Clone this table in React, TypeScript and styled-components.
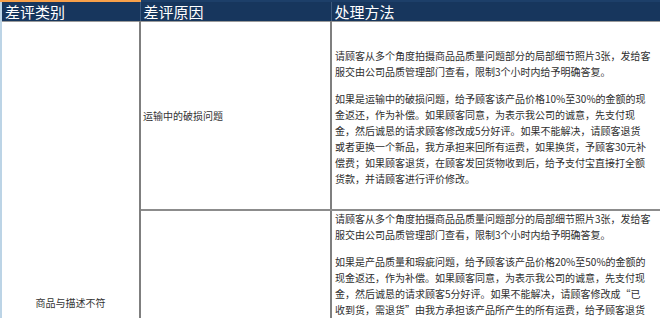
import React from "react";
import styled, { createGlobalStyle } from "styled-components";

const Global = createGlobalStyle`
  html, body {
    margin: 0;
    padding: 0;
    background: #ffffff;
    overflow: hidden;
  }
  body {
    font-family: "Noto Sans CJK SC", "Noto Sans", sans-serif;
  }
`;

const Table = styled.table`
  border-collapse: collapse;
  table-layout: fixed;
  width: 664px;
`;

const Col = styled.col<{ $w: number }>`
  width: ${(p) => p.$w}px;
`;

const HeadCell = styled.th<{ $first?: boolean }>`
  height: 19px;
  padding: 0 0 0 3px;
  background: #17365d;
  color: #ffffff;
  font-size: 15px;
  font-weight: 400;
  line-height: 19px;
  text-align: left;
  white-space: nowrap;
  border-top: 2px solid ${(p) => (p.$first ? "#f7a04a" : "#1d3f69")};
  border-bottom: 1px solid #9a9a9a;
  border-left: ${(p) => (p.$first ? "2px solid #bcd4e6" : "1px solid #3d5a7e")};
  vertical-align: middle;
`;

const CategoryCell = styled.td`
  border-left: 2px solid #bcd4e6;
  border-right: 2px solid #7f7f7f;
  padding: 0;
  font-size: 10px;
  line-height: 16px;
  color: #333333;
  text-align: center;
  vertical-align: middle;
  white-space: nowrap;
`;

const ReasonCell = styled.td<{ $h: number }>`
  height: ${(p) => p.$h}px;
  border-right: 2px solid #7f7f7f;
  border-bottom: 2px solid #8c8c8c;
  padding: 0 0 0 2px;
  font-size: 10px;
  line-height: 16px;
  color: #333333;
  vertical-align: middle;
  white-space: nowrap;
`;

const MethodCell = styled.td<{ $align: "middle" | "top" }>`
  border-bottom: 2px solid #8c8c8c;
  padding: ${(p) => (p.$align === "middle" ? "4px 0 0 3px" : "0 0 0 3px")};
  font-size: 10px;
  line-height: 16px;
  color: #2e2e2e;
  vertical-align: ${(p) => p.$align};
  white-space: nowrap;
`;

const Para = styled.p`
  margin: 0 0 11px 0;
  &:last-child {
    margin-bottom: 0;
  }
`;

type Row = {
  reason: string;
  height: number;
  align: "middle" | "top";
  paragraphs: string[][];
};

const intro = [
  "请顾客从多个角度拍摄商品品质量问题部分的局部细节照片3张，发给客",
  "服交由公司品质管理部门查看，限制3个小时内给予明确答复。",
];

const rows: Row[] = [
  {
    reason: "运输中的破损问题",
    height: 187,
    align: "middle",
    paragraphs: [
      intro,
      [
        "如果是运输中的破损问题，给予顾客该产品价格10%至30%的金额的现",
        "金返还，作为补偿。如果顾客同意，为表示我公司的诚意，先支付现",
        "金，然后诚恳的请求顾客修改成5分好评。如果不能解决，请顾客退货",
        "或者更换一个新品，我方承担来回所有运费，如果换货，予顾客30元补",
        "偿费；如果顾客退货，在顾客发回货物收到后，给予支付宝直接打全额",
        "货款，并请顾客进行评价修改。",
      ],
    ],
  },
  {
    reason: "",
    height: 371,
    align: "top",
    paragraphs: [
      intro,
      [
        "如果是产品质量和瑕疵问题，给予顾客该产品价格20%至50%的金额的",
        "现金返还，作为补偿。如果顾客同意，为表示我公司的诚意，先支付现",
        "金，然后诚恳的请求顾客5分好评。如果不能解决，请顾客修改成“已",
        "收到货，需退货”由我方承担该产品所产生的所有运费，给予顾客退货",
      ],
    ],
  },
];

export default function App() {
  return (
    <>
      <Global />
      <Table>
        <colgroup>
          <Col $w={139} />
          <Col $w={191} />
          <Col $w={334} />
        </colgroup>
        <thead>
          <tr>
            <HeadCell $first>差评类别</HeadCell>
            <HeadCell>差评原因</HeadCell>
            <HeadCell>处理方法</HeadCell>
          </tr>
        </thead>
        <tbody>
          {rows.map((row, i) => (
            <tr key={i}>
              {i === 0 && (
                <CategoryCell rowSpan={rows.length}>商品与描述不符</CategoryCell>
              )}
              <ReasonCell $h={row.height}>{row.reason}</ReasonCell>
              <MethodCell $align={row.align}>
                {row.paragraphs.map((lines, j) => (
                  <Para key={j}>
                    {lines.map((line, k) => (
                      <React.Fragment key={k}>
                        {k > 0 && <br />}
                        {line}
                      </React.Fragment>
                    ))}
                  </Para>
                ))}
              </MethodCell>
            </tr>
          ))}
        </tbody>
      </Table>
    </>
  );
}
